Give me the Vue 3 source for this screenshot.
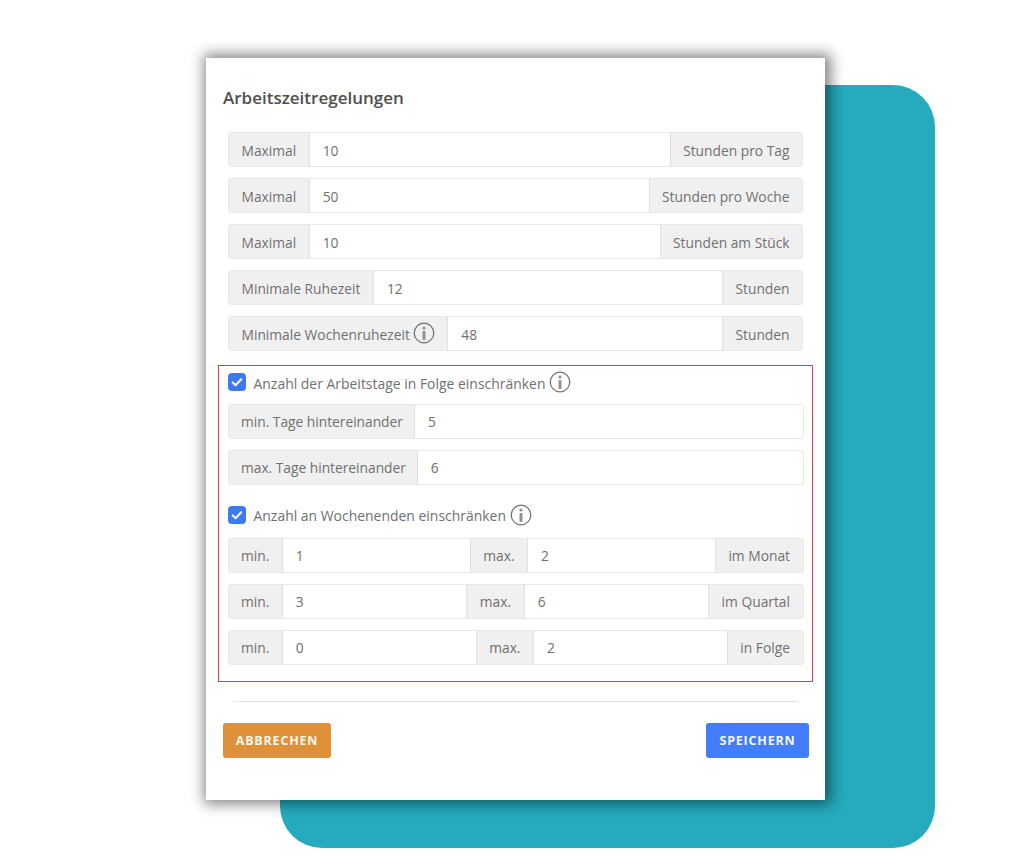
<script setup>
const hoursRows = [
  { before: 'Maximal', value: '10', after: 'Stunden pro Tag' },
  { before: 'Maximal', value: '50', after: 'Stunden pro Woche' },
  { before: 'Maximal', value: '10', after: 'Stunden am Stück' },
  { before: 'Minimale Ruhezeit', value: '12', after: 'Stunden' },
  { before: 'Minimale Wochenruhezeit', value: '48', after: 'Stunden', info: true },
]

const dayRows = [
  { label: 'min. Tage hintereinander', value: '5' },
  { label: 'max. Tage hintereinander', value: '6' },
]

const weekendRows = [
  { min: '1', max: '2', after: 'im Monat' },
  { min: '3', max: '6', after: 'im Quartal' },
  { min: '0', max: '2', after: 'in Folge' },
]
</script>

<template>
  <div class="page">
    <div class="backdrop"></div>
    <div class="card">
      <h2 class="title">Arbeitszeitregelungen</h2>

      <div class="rows">
        <div v-for="row in hoursRows" :key="row.after + row.value" class="group">
          <span class="addon addon-first">
            {{ row.before }}
            <svg v-if="row.info" class="info" viewBox="0 0 22 22">
              <circle cx="11" cy="11" r="9.8" />
              <rect x="9.5" y="9" width="3" height="9" rx="1" />
              <circle class="dot" cx="11" cy="6" r="1.6" />
            </svg>
          </span>
          <input class="field" :value="row.value" readonly>
          <span class="addon addon-last">{{ row.after }}</span>
        </div>
      </div>

      <div class="limits">
        <label class="check">
          <span class="box">
            <svg viewBox="0 0 18 18"><path d="M4.6 9.4l3 2.9 5.6-6" /></svg>
          </span>
          Anzahl der Arbeitstage in Folge einschränken
          <svg class="info" viewBox="0 0 22 22">
            <circle cx="11" cy="11" r="9.8" />
            <rect x="9.5" y="9" width="3" height="9" rx="1" />
            <circle class="dot" cx="11" cy="6" r="1.6" />
          </svg>
        </label>
        <div class="rows rows-inner">
          <div v-for="row in dayRows" :key="row.label" class="group">
            <span class="addon addon-first addon-tight">{{ row.label }}</span>
            <input class="field field-end" :value="row.value" readonly>
          </div>
        </div>

        <label class="check check-second">
          <span class="box">
            <svg viewBox="0 0 18 18"><path d="M4.6 9.4l3 2.9 5.6-6" /></svg>
          </span>
          Anzahl an Wochenenden einschränken
          <svg class="info" viewBox="0 0 22 22">
            <circle cx="11" cy="11" r="9.8" />
            <rect x="9.5" y="9" width="3" height="9" rx="1" />
            <circle class="dot" cx="11" cy="6" r="1.6" />
          </svg>
        </label>
        <div class="rows rows-inner">
          <div v-for="row in weekendRows" :key="row.after" class="group">
            <span class="addon addon-first">min.</span>
            <input class="field" :value="row.min" readonly>
            <span class="addon">max.</span>
            <input class="field" :value="row.max" readonly>
            <span class="addon addon-last">{{ row.after }}</span>
          </div>
        </div>
      </div>

      <hr class="divider">

      <div class="actions">
        <button class="btn btn-cancel">ABBRECHEN</button>
        <button class="btn btn-save">SPEICHERN</button>
      </div>
    </div>
  </div>
</template>

<style>
html, body {
  background: #fff;
}
</style>

<style scoped>
.page {
  position: relative;
  width: 1030px;
  height: 858px;
  padding: 58px 0 0 206px;
  box-sizing: border-box;
  overflow: hidden;
  font-family: "Open Sans", "Noto Sans", sans-serif;
  color: #707070;
}

.backdrop {
  position: absolute;
  left: 280px;
  top: 85px;
  width: 655px;
  height: 763px;
  background: #25abbd;
  border-radius: 42px;
}

.card {
  position: relative;
  width: 619px;
  height: 742px;
  padding: 0 22px 0 17px;
  box-sizing: border-box;
  background: #fff;
  box-shadow: 2px 0 13px 4px rgba(0, 0, 0, 0.48);
}

.title {
  margin: 0;
  padding-top: 28px;
  height: 74px;
  box-sizing: border-box;
  font-size: 17px;
  line-height: 24px;
  font-weight: 600;
  color: #4f4f4f;
}

.rows {
  display: flex;
  flex-direction: column;
  gap: 11px;
  margin-left: 5px;
}

.rows-inner {
  margin-left: 8.5px;
  margin-right: 8.5px;
}

.group {
  display: flex;
  height: 35px;
  font-size: 13.8px;
}

.addon {
  display: flex;
  align-items: center;
  gap: 3px;
  padding: 1px 12.5px 0;
  box-sizing: border-box;
  background: #f0f0f0;
  border: 1px solid #e8e8e8;
  border-left: 0;
  border-right: 0;
  white-space: nowrap;
}

.addon-first {
  border-left: 1px solid #e8e8e8;
  border-radius: 4px 0 0 4px;
}

.addon-last {
  border-right: 1px solid #e8e8e8;
  border-radius: 0 4px 4px 0;
}

.addon-tight {
  padding-right: 11px;
  letter-spacing: -0.02px;
}

.field {
  flex: 1;
  min-width: 0;
  padding: 1px 13px 0;
  box-sizing: border-box;
  border: 1px solid #e8e8e8;
  border-left: 1px solid #e0e0e0;
  border-right: 1px solid #e0e0e0;
  background: #fff;
  outline: none;
  font: inherit;
  color: #707070;
}

.field-end {
  border-right: 1px solid #e8e8e8;
  border-radius: 0 4px 4px 0;
}

.info {
  flex: none;
  width: 22px;
  height: 22px;
  margin-top: -2px;
  overflow: visible;
}

.info circle {
  fill: none;
  stroke: #6e6e6e;
  stroke-width: 1.2;
}

.info rect,
.info .dot {
  fill: #929292;
  stroke: none;
}

.limits {
  margin-top: 14px;
  height: 317px;
  box-sizing: border-box;
  padding-top: 5px;
  margin-left: -5px;
  width: 595px;
  border: 1.5px solid #e2383f;
}

.check {
  display: flex;
  align-items: center;
  gap: 4px;
  height: 22px;
  padding-top: 2px;
  box-sizing: border-box;
  margin: 0 0 10.5px 8.5px;
  font-size: 13.95px;
}

.check-second {
  margin-top: 19px;
  margin-bottom: 12px;
}

.box {
  flex: none;
  display: flex;
  width: 18px;
  height: 18px;
  margin-top: -2px;
  margin-right: 4px;
  border-radius: 4px;
  background: #3d78f5;
}

.box svg {
  width: 18px;
  height: 18px;
}

.box path {
  fill: none;
  stroke: #fff;
  stroke-width: 2;
  stroke-linecap: round;
  stroke-linejoin: round;
}

.divider {
  margin: 19px 5px 0 10px;
  border: 0;
  border-top: 1px solid #e2e2e2;
}

.actions {
  display: flex;
  justify-content: space-between;
  margin-top: 21px;
  margin-right: -6px;
}

.btn {
  height: 35px;
  padding: 0;
  border: 0;
  border-radius: 3px;
  font-family: "Open Sans", "Noto Sans", sans-serif;
  font-size: 12.5px;
  font-weight: 700;
  letter-spacing: 0.8px;
  color: #fdf6ea;
}

.btn-cancel {
  width: 108px;
  background: #de9138;
}

.btn-save {
  width: 103px;
  background: #437cfd;
  color: #f4f7ff;
}
</style>
